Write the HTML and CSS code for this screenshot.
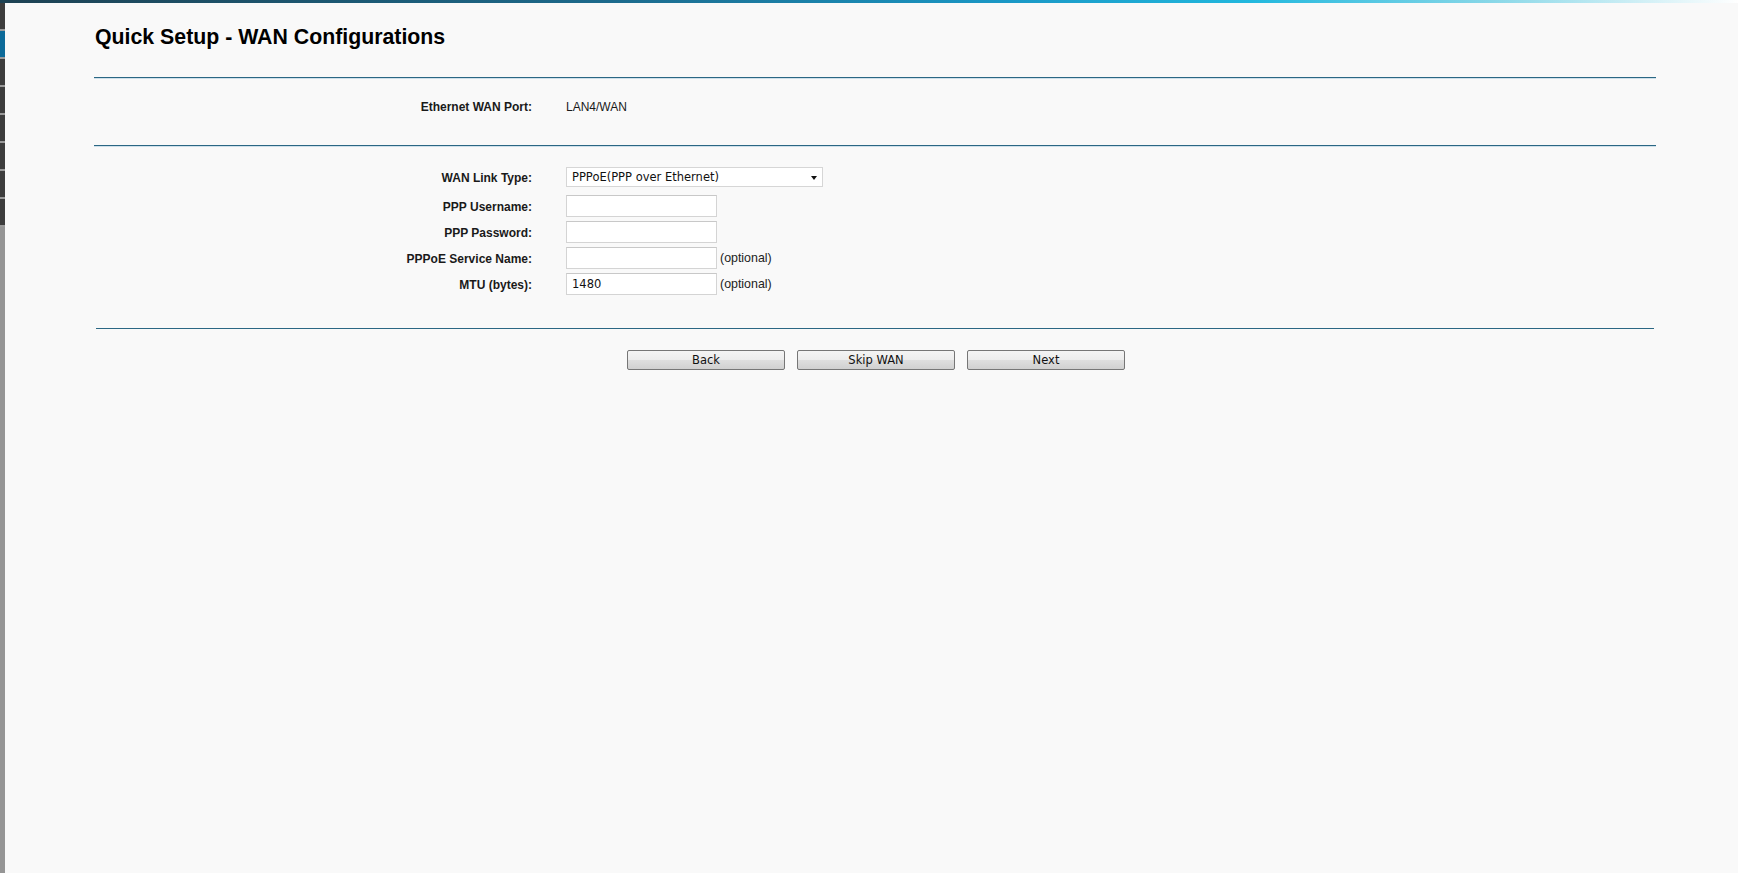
FILE: index.html
```html
<!DOCTYPE html>
<html lang="en">
<head>
  <meta charset="UTF-8" />
  <title>Quick Setup - WAN Configurations</title>
  <link rel="stylesheet" href="styles.css">
</head>
<body>

  <div class="topbar"></div>

  <div class="layout">
    <!-- left menu edge -->
    <div class="sidebar">
      <div class="menu-item"></div>
      <div class="menu-item active"></div>
      <div class="menu-item"></div>
      <div class="menu-item"></div>
      <div class="menu-item"></div>
      <div class="menu-item"></div>
      <div class="menu-item"></div>
      <div class="menu-item"></div>
      <div class="menu-rest"></div>
    </div>

    <div class="main">
      <h1 class="title">Quick Setup - WAN Configurations</h1>

      <div class="section port-section">
        <div class="row">
          <div class="label">Ethernet WAN Port:</div>
          <div class="value">LAN4/WAN</div>
        </div>
      </div>

      <div class="section form-section">
        <div class="row row-select">
          <div class="label">WAN Link Type:</div>
          <div class="value">
            <span class="select-wrap">
              <select class="select">
                <option>PPPoE(PPP over Ethernet)</option>
              </select>
            </span>
          </div>
        </div>
        <div class="row">
          <div class="label">PPP Username:</div>
          <div class="value"><input type="text" class="field" /></div>
        </div>
        <div class="row">
          <div class="label">PPP Password:</div>
          <div class="value"><input type="password" class="field" /></div>
        </div>
        <div class="row">
          <div class="label">PPPoE Service Name:</div>
          <div class="value"><input type="text" class="field" /><span class="hint">(optional)</span></div>
        </div>
        <div class="row">
          <div class="label">MTU (bytes):</div>
          <div class="value"><input type="text" class="field" value="1480" /><span class="hint">(optional)</span></div>
        </div>
      </div>

      <div class="section buttons">
        <button class="btn">Back</button>
        <button class="btn">Skip WAN</button>
        <button class="btn">Next</button>
      </div>
    </div>
  </div>

</body>
</html>
```

FILE: styles.css
```css
html, body { height: 100%; }
body { margin: 0; background: #f9f9f9; font-family: "Liberation Sans", Arial, sans-serif; font-size: 12px; color: #1a1a1a; overflow: hidden; }

.topbar { height: 3px; background: linear-gradient(to right, #1e4253 0%, #1c6a8c 35%, #1a98c6 58%, #22b8de 72%, #8ad8e8 86%, #ffffff 100%); }

.layout { display: flex; height: calc(100% - 3px); }

.sidebar { width: 5px; display: flex; flex-direction: column; flex-shrink: 0; }
.menu-item { height: 26px; background: #3d3d3d; border-bottom: 2px solid #9a9a9a; }
.menu-item.active { background: #0c6a99; }
.menu-rest { flex: 1; background: #959595; }

.main { width: 1562px; margin-left: 89px; }

.title { margin: 21px 0 0 1px; font-size: 21.3px; font-weight: bold; color: #000; line-height: 27px; }

.section { border-top: 1px solid #2b6784; box-shadow: inset 0 1px 0 #cfe0ea; }
.port-section { margin-top: 26px; padding: 22px 0 31px; }
.form-section { padding: 21px 0 29px; }

.row { display: grid; grid-template-columns: 438px 1fr; column-gap: 34px; align-items: center; height: 22px; margin-bottom: 4px; }
.row-select { height: 20px; margin-bottom: 8px; }
.port-section .row { height: 14px; margin-bottom: 0; }

.label { text-align: right; font-weight: bold; color: #1a1a1a; padding-top: 2px; }
.port-section .label { padding-top: 0; }
.value { display: flex; align-items: center; }

.select-wrap { position: relative; display: inline-block; }
.select-wrap::after { content: ""; position: absolute; right: 6px; top: 9px; border-left: 3px solid transparent; border-right: 3px solid transparent; border-top: 4px solid #111; pointer-events: none; }
.select { appearance: none; -webkit-appearance: none; width: 257px; height: 20px; margin: 0; padding: 0 0 0 5px; border: 1px solid #d6d6d6; border-radius: 0; background: #fff; font-family: "DejaVu Sans", Tahoma, sans-serif; font-size: 11.5px; color: #111; }

.field { box-sizing: border-box; width: 151px; height: 22px; margin: 0; padding: 0 5px; border: 1px solid #d4d4d4; border-top-color: #c8c8c8; background: #fff; font-family: "DejaVu Sans", Tahoma, sans-serif; font-size: 11.5px; color: #111; outline: none; }
.hint { margin-left: 3px; color: #222; font-size: 12.4px; }

.buttons { margin: 0 2px; padding: 21px 0 0 531px; display: flex; gap: 12px; box-shadow: none; border-top: 1px solid #2b6784; }
.btn { width: 158px; height: 20px; padding: 0; border: 1px solid #767676; border-radius: 2px; background: linear-gradient(#f4f4f4, #ececec 50%, #dedede 51%, #d0d0d0); font-family: "DejaVu Sans", Tahoma, sans-serif; font-size: 11.5px; color: #111; cursor: pointer; }
.btn:hover { background: linear-gradient(#eaf6fd, #d9f0fc 50%, #bee6fd 51%, #a7d9f5); }
```
